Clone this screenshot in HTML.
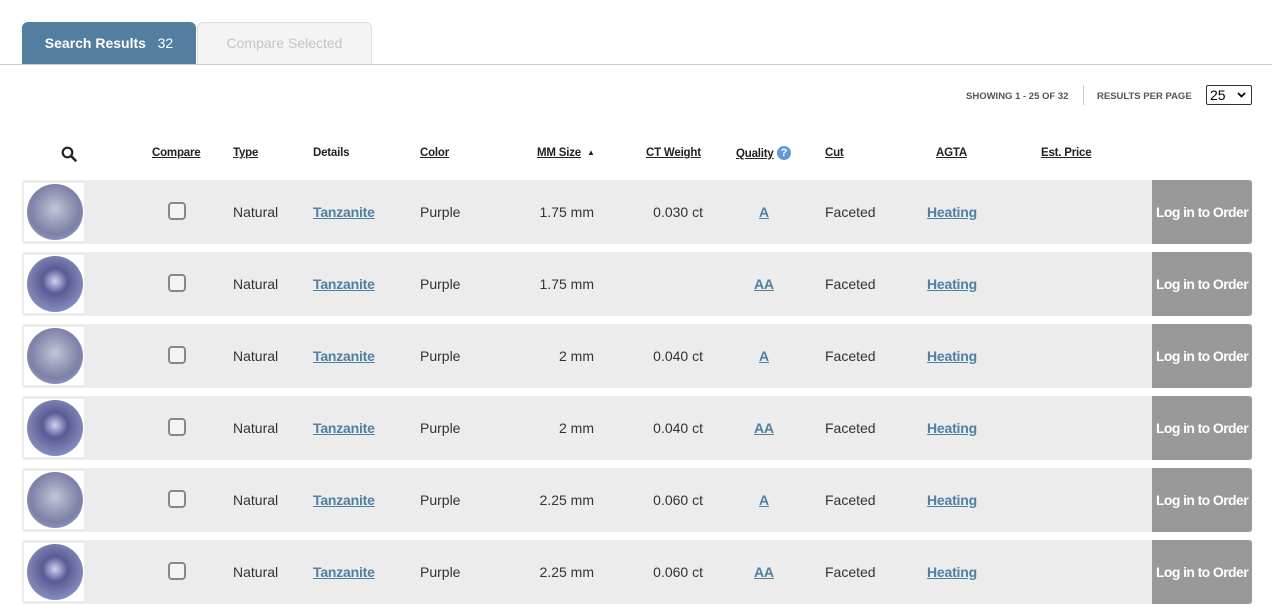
<!DOCTYPE html>
<html><head><meta charset="utf-8"><style>
*{margin:0;padding:0;box-sizing:border-box}
body{width:1272px;height:609px;background:#fff;font-family:"Liberation Sans",Arial,sans-serif;position:relative;overflow:hidden;color:#333}
.a{position:absolute;white-space:nowrap}
.tab1{left:22px;top:22px;width:174px;height:43px;background:#527f9f;border-radius:6px 6px 0 0;color:#fff;font-size:14px;line-height:42px;text-align:center}
.tab2{left:197px;top:22px;width:175px;height:43px;background:#f4f4f4;border:1px solid #ddd;border-bottom:none;border-radius:6px 6px 0 0;color:#c4c4c4;font-size:14px;line-height:40px;text-align:center}
.line{left:0;top:64px;width:1272px;height:1px;background:#ccc}
.sm{font-size:9.5px;color:#555;font-weight:bold}
.hd{top:147px;font-size:11.5px;font-weight:bold;text-decoration:underline;color:#222;letter-spacing:-.2px}
.row{left:22px;width:1230px;height:64px;background:#ececec;border-radius:3px}
.img{position:absolute;left:2px;top:3px;width:60px;height:58px;background:#fff}
.gem{position:absolute;left:3px;top:1px;width:56px;height:56px;border-radius:50%;background:radial-gradient(circle at 50% 45%,#c4c6d8 0,#9a9cb8 35%,#7d80a8 60%,#a5b0d8 100%)}
.gem.b{background:radial-gradient(circle at 50% 45%,#d0d4f0 0,#5a5a94 30%,#7a7eb0 60%,#9aaad8 100%)}
.cb{position:absolute;left:146px;top:22px;width:18px;height:18px;border:2px solid #888;border-radius:4px;background:#f4f4f4}
.t{position:absolute;top:24px;font-size:14px;color:#333}
.l{color:#4f7fa3;text-decoration:underline;font-weight:bold;letter-spacing:-.2px}
.btn{position:absolute;right:0;top:0;width:100px;height:64px;background:#999;border-radius:0 3px 3px 0;color:#fff;font-weight:bold;font-size:14px;line-height:64px;text-align:center;letter-spacing:-.6px}
</style></head><body>
<div class="a tab1"><b>Search Results</b>&nbsp;&nbsp; 32</div>
<div class="a tab2">Compare Selected</div>
<div class="a line"></div>
<div class="a sm" style="left:966px;top:91px">SHOWING 1 - 25 OF 32</div>
<div class="a" style="left:1083px;top:85px;width:1px;height:20px;background:#ccc"></div>
<div class="a sm" style="left:1097px;top:91px">RESULTS PER PAGE</div>
<div class="a" style="left:1206px;top:85px;width:46px;height:20px;border:1px solid #333;border-radius:2px;font-size:14px;line-height:18px;padding-left:3px;color:#000">25<svg style="position:absolute;right:5px;top:6px" width="9" height="6" viewBox="0 0 9 6"><path d="M1 1l3.5 3.5L8 1" fill="none" stroke="#000" stroke-width="1.8"/></svg></div>
<svg class="a" style="left:61px;top:146px" width="16" height="16" viewBox="0 0 16 16"><circle cx="6.5" cy="6.5" r="4.8" fill="none" stroke="#222" stroke-width="2.2"/><line x1="10" y1="10" x2="14.5" y2="14.5" stroke="#222" stroke-width="2.5" stroke-linecap="round"/></svg>
<div class="a hd" style="left:152px">Compare</div>
<div class="a hd" style="left:233px">Type</div>
<div class="a hd" style="left:313px;text-decoration:none">Details</div>
<div class="a hd" style="left:420px">Color</div>
<div class="a hd" style="left:537px">MM Size</div><div class="a" style="left:587px;top:148px;font-size:8px;color:#222">&#9650;</div>
<div class="a hd" style="left:646px">CT Weight</div>
<div class="a hd" style="left:736px;top:148px">Quality</div><div class="a" style="left:777px;top:146px;width:14px;height:14px;border-radius:50%;background:#5b9bd5;color:#fff;font-size:11px;font-weight:bold;text-align:center;line-height:14px">?</div>
<div class="a hd" style="left:825px">Cut</div>
<div class="a hd" style="left:936px">AGTA</div>
<div class="a hd" style="left:1041px">Est. Price</div>

<div class="a row" style="top:180px"><div class="img"><div class="gem"></div></div><div class="cb"></div><span class="t" style="left:211px">Natural</span><span class="t l" style="left:291px">Tanzanite</span><span class="t" style="left:398px">Purple</span><span class="t" style="right:658px">1.75 mm</span><span class="t" style="right:549px">0.030 ct</span><span class="t l" style="left:737px">A</span><span class="t" style="left:803px">Faceted</span><span class="t l" style="left:905px">Heating</span><div class="btn">Log in to Order</div></div>
<div class="a row" style="top:252px"><div class="img"><div class="gem b"></div></div><div class="cb"></div><span class="t" style="left:211px">Natural</span><span class="t l" style="left:291px">Tanzanite</span><span class="t" style="left:398px">Purple</span><span class="t" style="right:658px">1.75 mm</span><span class="t l" style="left:732px">AA</span><span class="t" style="left:803px">Faceted</span><span class="t l" style="left:905px">Heating</span><div class="btn">Log in to Order</div></div>
<div class="a row" style="top:324px"><div class="img"><div class="gem"></div></div><div class="cb"></div><span class="t" style="left:211px">Natural</span><span class="t l" style="left:291px">Tanzanite</span><span class="t" style="left:398px">Purple</span><span class="t" style="right:658px">2 mm</span><span class="t" style="right:549px">0.040 ct</span><span class="t l" style="left:737px">A</span><span class="t" style="left:803px">Faceted</span><span class="t l" style="left:905px">Heating</span><div class="btn">Log in to Order</div></div>
<div class="a row" style="top:396px"><div class="img"><div class="gem b"></div></div><div class="cb"></div><span class="t" style="left:211px">Natural</span><span class="t l" style="left:291px">Tanzanite</span><span class="t" style="left:398px">Purple</span><span class="t" style="right:658px">2 mm</span><span class="t" style="right:549px">0.040 ct</span><span class="t l" style="left:732px">AA</span><span class="t" style="left:803px">Faceted</span><span class="t l" style="left:905px">Heating</span><div class="btn">Log in to Order</div></div>
<div class="a row" style="top:468px"><div class="img"><div class="gem"></div></div><div class="cb"></div><span class="t" style="left:211px">Natural</span><span class="t l" style="left:291px">Tanzanite</span><span class="t" style="left:398px">Purple</span><span class="t" style="right:658px">2.25 mm</span><span class="t" style="right:549px">0.060 ct</span><span class="t l" style="left:737px">A</span><span class="t" style="left:803px">Faceted</span><span class="t l" style="left:905px">Heating</span><div class="btn">Log in to Order</div></div>
<div class="a row" style="top:540px"><div class="img"><div class="gem b"></div></div><div class="cb"></div><span class="t" style="left:211px">Natural</span><span class="t l" style="left:291px">Tanzanite</span><span class="t" style="left:398px">Purple</span><span class="t" style="right:658px">2.25 mm</span><span class="t" style="right:549px">0.060 ct</span><span class="t l" style="left:732px">AA</span><span class="t" style="left:803px">Faceted</span><span class="t l" style="left:905px">Heating</span><div class="btn">Log in to Order</div></div>
</body></html>
